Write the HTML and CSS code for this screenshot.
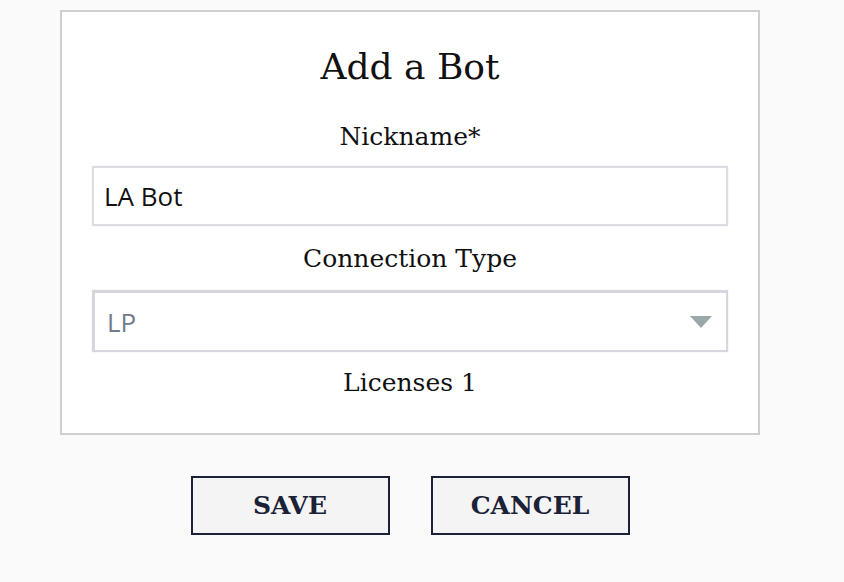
FILE: index.html
```html
<!DOCTYPE html>
<html>
<head>
<meta charset="utf-8">
<link rel="stylesheet" href="styles.css">
</head>
<body>
<div class="page">
  <div class="card">
    <h1 class="title">Add a Bot</h1>
    <div class="label label-nick">Nickname*</div>
    <div class="field field-input">LA Bot</div>
    <div class="label label-conn">Connection Type</div>
    <div class="field field-select">
      <span class="select-value">LP</span>
      <span class="caret"></span>
    </div>
    <div class="label label-lic">Licenses 1</div>
  </div>
  <div class="actions">
    <button class="btn">SAVE</button>
    <button class="btn">CANCEL</button>
  </div>
</div>
</body>
</html>
```

FILE: styles.css
```css
html, body {
  margin: 0;
  padding: 0;
  background: #fafafa;
}
.page {
  padding: 10px 0 0 60px;
  width: 700px;
}
.card {
  box-sizing: border-box;
  width: 700px;
  height: 425px;
  background: #ffffff;
  border: 2px solid #cfcfcf;
  padding: 31px 30px 0 30px;
  display: flex;
  flex-direction: column;
  align-items: center;
  font-family: "DejaVu Serif", serif;
  color: #111111;
}
.title {
  margin: 0;
  font-weight: normal;
  font-size: 36px;
  line-height: 48px;
  height: 48px;
}
.label {
  font-size: 25px;
  line-height: 32px;
  height: 32px;
}
.label-nick { margin-top: 30px; }
.label-conn { margin-top: 17px; }
.label-lic { margin-top: 15px; }
.field {
  box-sizing: border-box;
  width: 636px;
  background: #ffffff;
  display: flex;
  align-items: center;
  font-family: "Open Sans", sans-serif;
  font-size: 26px;
}
.field-input {
  margin-top: 13px;
  height: 60px;
  border: 2px solid #dcdce3;
  box-shadow: 0 0 1px rgba(0, 0, 0, 0.15);
  padding-left: 10px;
  color: #111111;
}
.field-select {
  margin-top: 15px;
  height: 62px;
  border: 2px solid #d6d6de;
  border-top-width: 3px;
  border-left-width: 3px;
  box-shadow: 0 0 1px rgba(0, 0, 0, 0.15);
  padding: 0 14px 0 12px;
  color: #737b8b;
  justify-content: space-between;
}
.caret {
  width: 0;
  height: 0;
  border-left: 11.5px solid transparent;
  border-right: 11.5px solid transparent;
  border-top: 12px solid #9aa8aa;
}
.actions {
  display: flex;
  justify-content: center;
  gap: 41px;
  margin-top: 41px;
}
.btn {
  box-sizing: border-box;
  width: 199px;
  height: 59px;
  background: #f4f4f4;
  border: 2px solid #1b2237;
  color: #1b2237;
  font-family: "DejaVu Serif", serif;
  font-weight: bold;
  font-size: 25px;
  padding: 0;
  margin: 0;
}
```
